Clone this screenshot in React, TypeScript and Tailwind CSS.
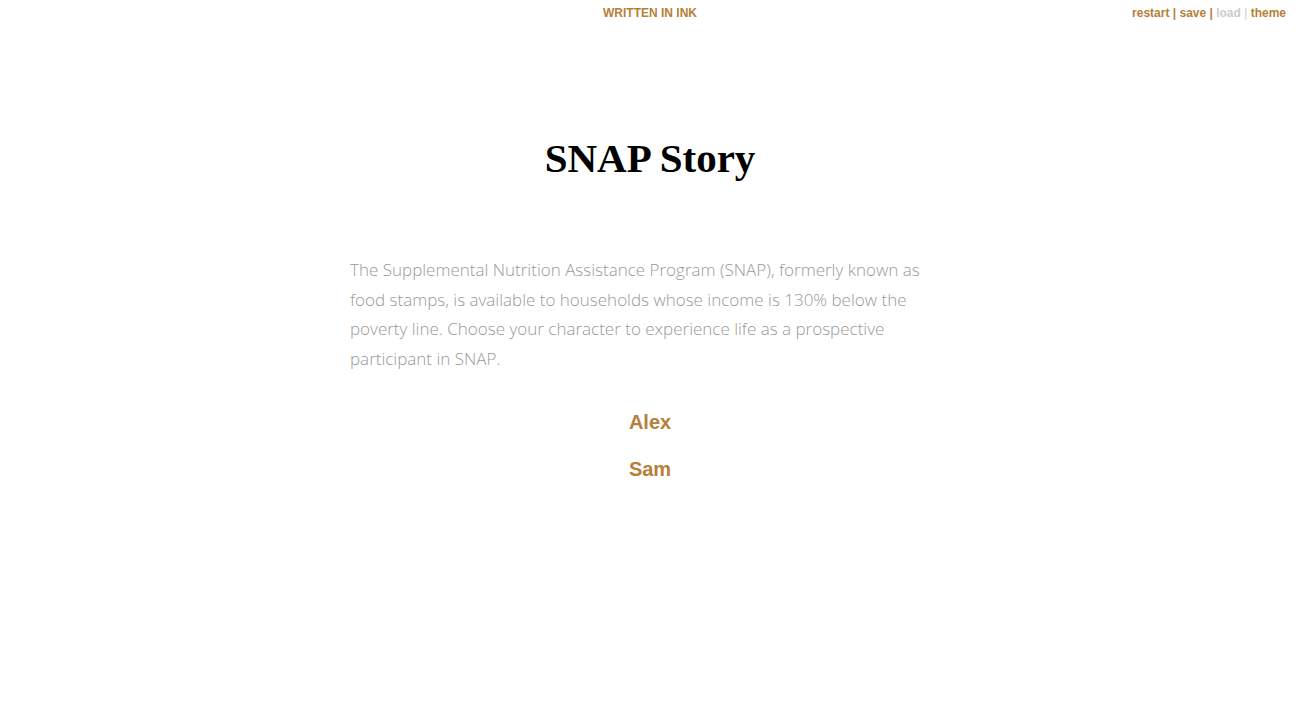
export default function App() {
  return (
    <div className="min-h-screen bg-white relative">
      <div className="h-[26px] flex items-center justify-center">
        <span className="text-[12px] font-bold text-[#b5803a]" style={{ fontFamily: '"Liberation Sans", Arial, sans-serif' }}>
          WRITTEN IN INK
        </span>
      </div>
      <div className="absolute right-[14px] top-0 h-[26px] flex items-center text-[12px] font-bold text-[#b5803a] whitespace-pre" style={{ fontFamily: '"Liberation Sans", Arial, sans-serif' }}>
        <a>restart</a>
        <span> | </span>
        <a>save</a>
        <span> | </span>
        <span className="text-[#cccccc]">load</span>
        <span className="text-[#cccccc] font-normal"> | </span>
        <a>theme</a>
      </div>

      <div className="max-w-[600px] mx-auto">
        <h1 className="text-center text-[41px] font-bold text-black mt-[106px] leading-[52px]" style={{ fontFamily: '"Liberation Serif", "DejaVu Serif", serif' }}>
          SNAP Story
        </h1>
        <p className="mt-[71px] text-[17px] leading-[29.5px] font-light text-[#999999]" style={{ fontFamily: '"Open Sans", sans-serif' }}>
          The Supplemental Nutrition Assistance Program (SNAP), formerly known as food stamps, is available to households whose income is 130% below the poverty line. Choose your character to experience life as a prospective participant in SNAP.
        </p>
        <div className="mt-[38px] flex flex-col items-center gap-[24px] text-[20px] font-bold text-[#b5803a] leading-[23px]" style={{ fontFamily: '"Liberation Sans", Arial, sans-serif' }}>
          <a>Alex</a>
          <a>Sam</a>
        </div>
      </div>
    </div>
  )
}
